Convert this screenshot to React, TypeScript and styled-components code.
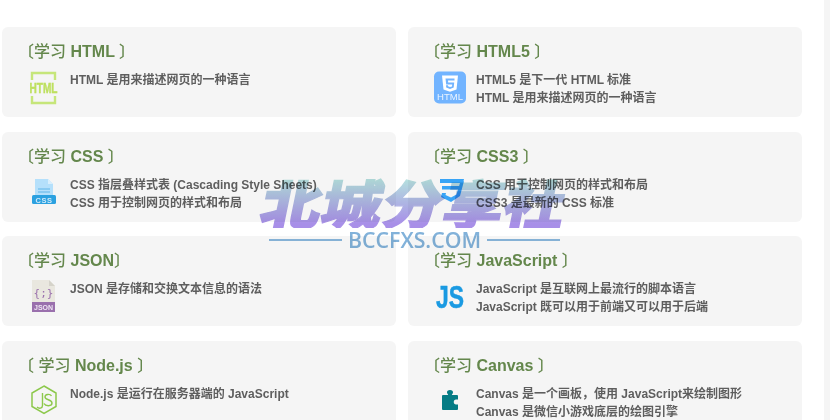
import React from "react";
import styled, { createGlobalStyle } from "styled-components";

const Global = createGlobalStyle`
  html, body { margin: 0; padding: 0; height: 420px; overflow: hidden; background: #fff; }
`;
const Page = styled.div`
  position: relative;
  display: flex;
  justify-content: space-between;
  width: 830px;
  height: 420px;
  overflow: hidden;
  font-family: "Liberation Sans", "Noto Sans CJK SC", sans-serif;
`;
const Grid = styled.main`
  display: grid;
  grid-template-columns: 394px 394px;
  grid-auto-rows: 90px;
  column-gap: 12px;
  row-gap: 14.6px;
  padding: 27px 0 0 2px;
  align-content: start;
`;
const Track = styled.div`
  width: 6px;
  height: 100%;
  background: #f5f5f5;
`;
const Card = styled.section`
  background: #f5f5f5;
  border-radius: 6px;
  padding: 15px 24px 0;
  box-sizing: border-box;
`;
const Title = styled.h2`
  margin: 0;
  font-size: 16px;
  line-height: 20px;
  font-weight: 700;
  color: #64874c;
  white-space: pre;
`;
const Thin = styled.span`
  font-weight: 500;
`;
const OpenBracket = styled(Thin)`
  margin-left: -8px;
`;
const Body = styled.div`
  display: flex;
  margin-top: 9px;
`;
const IconBox = styled.div`
  width: 44px;
  height: 34px;
  flex: none;
  padding-left: 3px;
  box-sizing: border-box;
`;
const Glyph = styled.svg`
  display: block;
  overflow: visible;
`;
const Lines = styled.div`
  font-size: 12px;
  line-height: 18px;
  font-weight: 700;
  color: #5e5e5e;
  white-space: nowrap;
`;
const Line = styled.div``;
const Watermark = styled.div`
  position: absolute;
  left: 262px;
  top: 176px;
  width: 306px;
  pointer-events: none;
  mix-blend-mode: multiply;
`;
const Brand = styled.div`
  font-family: "Noto Sans CJK SC", sans-serif;
  font-weight: 900;
  font-size: 52px;
  line-height: 52px;
  white-space: nowrap;
  width: 262px;
  transform-origin: left center;
  transform: scaleX(1.17) skewX(-10deg);
  background: linear-gradient(180deg, #b4dede 8%, #a88fe8 92%);
  -webkit-background-clip: text;
  background-clip: text;
  color: transparent;
  -webkit-text-stroke: 1.2px transparent;
`;
const DomainRow = styled.div`
  display: flex;
  align-items: center;
  gap: 6px;
  margin-top: 2px;
  color: #82b2da;
  font-family: "Open Sans", "Liberation Sans", sans-serif;
  font-weight: 600;
  font-size: 21.3px;
  line-height: 20px;
  white-space: nowrap;
  padding-left: 7px;
`;
const Rule = styled.span`
  display: block;
  width: 73px;
  height: 2px;
  background: #8ab8de;
`;

const Html = () => (
  <Glyph width="28" height="34" viewBox="0 0 28 34">
    <path d="M3 9V2h23v7M3 25v7h23v-7" fill="none" stroke="#c6e67a" strokeWidth="2.4" />
    <text x="14.5" y="21.5" textAnchor="middle" fontFamily="Liberation Sans" fontWeight="700" fontSize="14" fill="#bee05f" stroke="#bee05f" strokeWidth=".4" textLength="28" lengthAdjust="spacingAndGlyphs">HTML</text>
  </Glyph>
);
const Html5 = () => (
  <Glyph width="32" height="33" viewBox="0 0 32 33">
    <rect x="-1" width="32" height="32" y="0.5" rx="5" fill="#72b4ff" />
    <path d="M7 4.5h16l-1.5 14-6.500 2.200-6.500-2.200z" fill="#fff" />
    <path d="M10.500 7.500h9v2h-6.500l.2 2h6l-.5 5L15 18l-3.800-1.500-.2-2.200h2l.1 1L15 16l2-.6.2-1.900h-6z" fill="#72b4ff" />
    <text x="15" y="28.500" textAnchor="middle" fontFamily="Liberation Sans" fontSize="8.500" fill="#eaf4ff" textLength="26" lengthAdjust="spacingAndGlyphs">HTML</text>
  </Glyph>
);
const Css = () => (
  <Glyph width="28" height="34" viewBox="0 0 28 34">
    <path d="M6 3h13l5 5v16H6z" fill="#b5e0fb" />
    <path d="M19 3l5 5h-5z" fill="#d9effd" />
    <path d="M9 13h12M9 16h12" stroke="#5fb5e8" strokeWidth="1" />
    <rect x="3" y="19" width="24" height="9" rx="1.500" fill="#2ba1e0" />
    <text x="15" y="26.500" textAnchor="middle" fontFamily="Liberation Sans" fontWeight="700" fontSize="7.500" fill="#cfeafa" letterSpacing=".6">CSS</text>
  </Glyph>
);
const Css3 = () => (
  <Glyph width="28" height="34" viewBox="0 0 28 34">
    <path d="M5 3h24l-1 4H5z" fill="#38a4f6" />
    <path d="M7 10h18l-1 3.500H7z" fill="#38a4f6" />
    <path d="M29 5l-4 15-9 6-10-5 1-4h4l-.5 2 5.500 2.500 5.500-3L25 7z" fill="#38a4f6" />
  </Glyph>
);
const Json = () => (
  <Glyph width="28" height="34" viewBox="0 0 28 34">
    <path d="M3 0h17l6 6v26H3z" fill="#e9e7df" />
    <path d="M20 0l6 6h-6z" fill="#d5d3ca" />
    <text x="14.500" y="17" textAnchor="middle" fontFamily="DejaVu Sans Mono" fontSize="11" fill="#9a70ad">{"{;}"}</text>
    <rect x="3" y="22" width="23" height="10" fill="#9a70ad" />
    <text x="14.500" y="30" textAnchor="middle" fontFamily="Liberation Sans" fontSize="8" fontWeight="700" fill="#efe6f3" textLength="19" lengthAdjust="spacingAndGlyphs">JSON</text>
  </Glyph>
);
const Js = () => (
  <Glyph width="32" height="34" viewBox="0 0 32 34">
    <text x="1" y="28" fontFamily="Liberation Sans" fontWeight="700" fontSize="32" fill="#1a9ae2" stroke="#1a9ae2" strokeWidth=".5" textLength="28" lengthAdjust="spacingAndGlyphs">JS</text>
  </Glyph>
);
const Node = () => (
  <Glyph width="28" height="34" viewBox="0 0 28 34">
    <path d="M15 1l12 7v13.500l-12 7-12-7V8z" fill="none" stroke="#8cc84b" strokeWidth="1.500" />
    <path d="M13.500 8v12.500c0 3-3.500 3.500-5.500 1.500M22.500 11c-1.500-2.500-6.500-2-6.500 1 0 3.500 7 2 7 6 0 3.500-6.500 3.500-8 .5" fill="none" stroke="#8cc84b" strokeWidth="1.400" />
  </Glyph>
);
const Puzzle = () => (
  <Glyph width="28" height="34" viewBox="0 0 28 34">
    <path d="M15 5c2 0 3.200 1.200 3 2.600-.1 1-.8 1.700-1.200 2.400H22a1 1 0 0 1 1 1v3.500h-2c-3 0-3 5 0 5h2v4.500a1 1 0 0 1-1 1H8a1 1 0 0 1-1-1V11a1 1 0 0 1 1-1h5.200c-.4-.7-1.100-1.400-1.200-2.400-.2-1.400 1-2.600 3-2.600z" fill="#057c85" />
  </Glyph>
);

const cards = [
  { lead: "学习", name: " HTML ", icon: <Html />, lines: ["HTML 是用来描述网页的一种语言"] },
  { lead: "学习", name: " HTML5 ", icon: <Html5 />, lines: ["HTML5 是下一代 HTML 标准", "HTML 是用来描述网页的一种语言"] },
  { lead: "学习", name: " CSS ", icon: <Css />, lines: ["CSS 指层叠样式表 (Cascading Style Sheets)", "CSS 用于控制网页的样式和布局"] },
  { lead: "学习", name: " CSS3 ", icon: <Css3 />, lines: ["CSS 用于控制网页的样式和布局", "CSS3 是最新的 CSS 标准"] },
  { lead: "学习", name: " JSON", icon: <Json />, lines: ["JSON 是存储和交换文本信息的语法"] },
  { lead: "学习", name: " JavaScript ", icon: <Js />, lines: ["JavaScript 是互联网上最流行的脚本语言", "JavaScript 既可以用于前端又可以用于后端"] },
  { lead: " 学习", name: " Node.js ", icon: <Node />, lines: ["Node.js 是运行在服务器端的 JavaScript"] },
  { lead: "学习", name: " Canvas ", icon: <Puzzle />, lines: ["Canvas 是一个画板，使用 JavaScript来绘制图形", "Canvas 是微信小游戏底层的绘图引擎"] },
];

export default function App() {
  return (
    <Page>
      <Global />
      <Grid>
        {cards.map((c) => (
          <Card key={c.name}>
            <Title>
              <OpenBracket>〔</OpenBracket>
              <Thin>{c.lead}</Thin>
              {c.name}
              <Thin>〕</Thin>
            </Title>
            <Body>
              <IconBox>{c.icon}</IconBox>
              <Lines>
                {c.lines.map((l) => (
                  <Line key={l}>{l}</Line>
                ))}
              </Lines>
            </Body>
          </Card>
        ))}
      </Grid>
      <Track />
      <Watermark>
        <Brand>北城分享社</Brand>
        <DomainRow>
          <Rule />
          BCCFXS.COM
          <Rule />
        </DomainRow>
      </Watermark>
    </Page>
  );
}
